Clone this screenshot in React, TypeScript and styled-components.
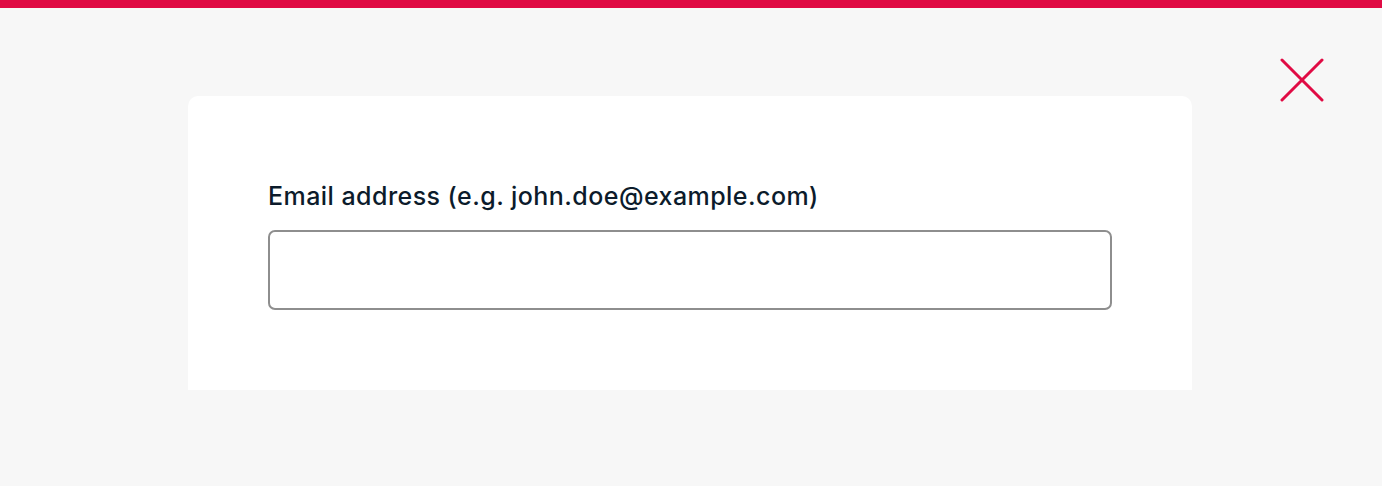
import React from "react";
import styled, { createGlobalStyle } from "styled-components";

const Global = createGlobalStyle`
  html, body { margin: 0; padding: 0; background: #f7f7f7; }
  body { font-family: "Inter", "Noto Sans", sans-serif; }
  * { box-sizing: border-box; }
`;

const Page = styled.div`
  width: 1382px;
  height: 486px;
  background: #f7f7f7;
  border-top: 8px solid #e00b44;
  display: flex;
  flex-direction: column;
  overflow: hidden;
`;

const TopRow = styled.div`
  display: flex;
  justify-content: flex-end;
  padding: 50px 58px 0 0;
  height: 88px;
`;

const CloseButton = styled.button`
  width: 44px;
  height: 44px;
  padding: 0;
  border: none;
  background: transparent;
  cursor: pointer;
  display: flex;
  align-items: center;
  justify-content: center;
`;

const Card = styled.div`
  margin-left: 188px;
  width: 1004px;
  height: 294px;
  background: #ffffff;
  border-radius: 10px 10px 0 0;
  padding: 82px 80px 0 80px;
  display: flex;
  flex-direction: column;
`;

const Label = styled.label`
  font-family: "Inter", "Noto Sans", sans-serif;
  font-size: 25px;
  line-height: 36px;
  font-weight: 500;
  letter-spacing: 0.45px;
  color: #0c1b2b;
  margin-bottom: 16px;
`;

const Input = styled.input`
  width: 844px;
  height: 80px;
  border: 2px solid #8e8e8e;
  border-radius: 7px;
  background: #fff;
  font-size: 20px;
  padding: 0 16px;
  outline: none;
`;

export default function App() {
  return (
    <>
      <Global />
      <Page>
        <TopRow>
          <CloseButton aria-label="Close">
            <svg width="44" height="44" viewBox="0 0 44 44">
              <path d="M2 2 L42 42 M42 2 L2 42" stroke="#e00b44" strokeWidth="3" strokeLinecap="round" />
            </svg>
          </CloseButton>
        </TopRow>
        <Card>
          <Label htmlFor="email">Email address (e.g. john.doe@example.com)</Label>
          <Input id="email" type="email" />
        </Card>
      </Page>
    </>
  );
}
